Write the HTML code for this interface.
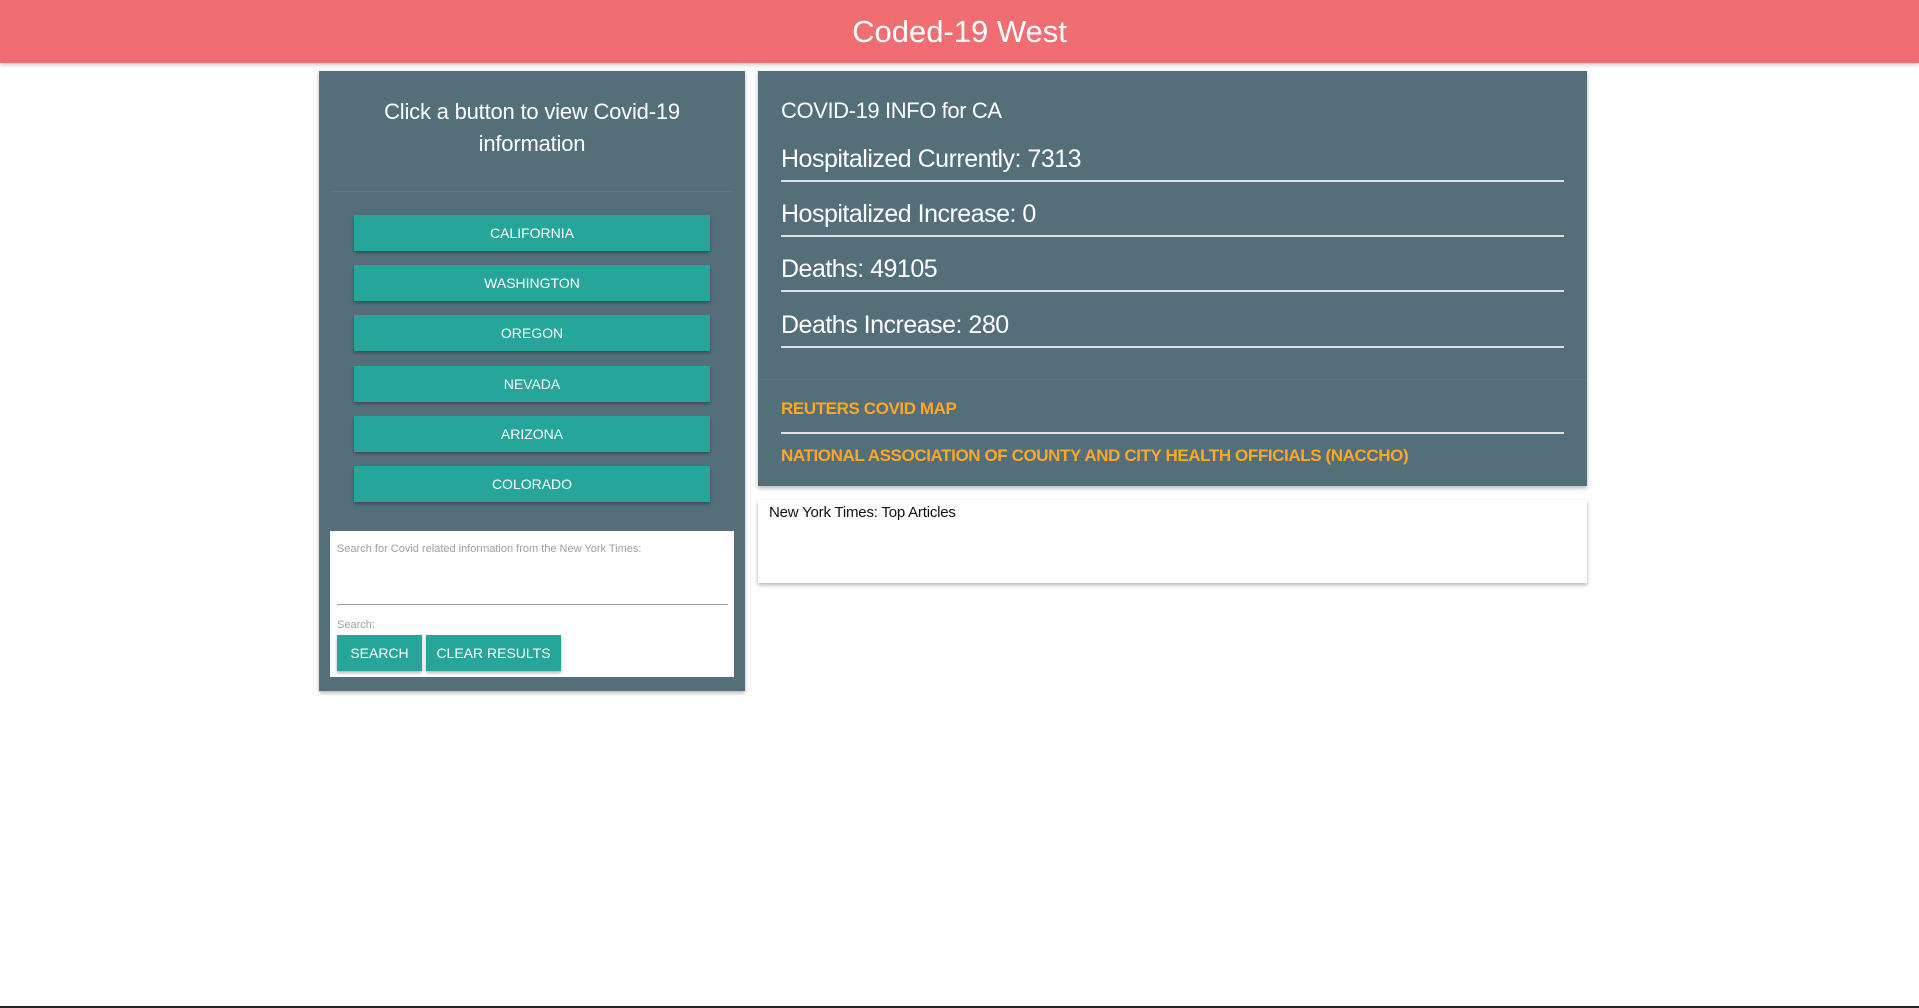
<!DOCTYPE html>
<html><head><meta charset="utf-8"><style>
*{margin:0;padding:0;box-sizing:border-box}
body{width:1919px;height:1008px;background:#fff;font-family:"Liberation Sans",sans-serif;position:relative;overflow:hidden}
.a{position:absolute}
.hdr{left:0;top:0;width:1919px;height:63px;background:#f06e72;box-shadow:0 2px 4px rgba(0,0,0,.2);color:#fff;font-size:31px;text-align:center;line-height:64px}
.panel{background:#546e7a;box-shadow:0 2px 4px rgba(0,0,0,.3)}
.btn{left:354px;width:356px;height:36px;background:#26a69a;color:#fff;font-size:14px;text-align:center;line-height:36px;box-shadow:0 2px 3px rgba(0,0,0,.3)}
.item{left:781px;width:783px;color:#fff;font-size:25px;letter-spacing:-.5px;border-bottom:2px solid #e0e0e0;height:40px;line-height:34px}
.lnk{left:781px;color:#ffa726;font-weight:bold;font-size:17px;letter-spacing:-.4px}
.sb{height:36px;background:#26a69a;color:#fff;font-size:14px;line-height:36px;text-align:center;box-shadow:0 2px 3px rgba(0,0,0,.3)}
</style></head><body>
<div class="a hdr">Coded-19 West</div>
<div class="a panel" style="left:319px;top:71px;width:426px;height:620px"></div>
<div class="a" style="left:319px;top:96px;width:426px;text-align:center;color:#fff;font-size:22px;line-height:32px;letter-spacing:-.2px">Click a button to view Covid-19<br>information</div>
<div class="a" style="left:330px;top:191px;width:404px;height:1px;background:#62787f"></div>
<div class="a btn" style="top:215px">CALIFORNIA</div>
<div class="a btn" style="top:265px">WASHINGTON</div>
<div class="a btn" style="top:315px">OREGON</div>
<div class="a btn" style="top:366px">NEVADA</div>
<div class="a btn" style="top:416px">ARIZONA</div>
<div class="a btn" style="top:466px">COLORADO</div>
<div class="a" style="left:330px;top:531px;width:404px;height:146px;background:#fff"></div>
<div class="a" style="left:337px;top:543px;color:#9e9e9e;font-size:11px">Search for Covid related information from the New York Times:</div>
<div class="a" style="left:337px;top:604px;width:391px;height:1px;background:#9e9e9e"></div>
<div class="a" style="left:337px;top:619px;color:#9e9e9e;font-size:11px">Search:</div>
<div class="a sb" style="left:337px;top:635px;width:85px">SEARCH</div>
<div class="a sb" style="left:426px;top:635px;width:135px">CLEAR RESULTS</div>

<div class="a panel" style="left:758px;top:71px;width:829px;height:415px"></div>
<div class="a" style="left:781px;top:98px;color:#fff;font-size:22px;letter-spacing:-.4px">COVID-19 INFO for CA</div>
<div class="a item" style="top:142px">Hospitalized Currently: 7313</div>
<div class="a item" style="top:197px">Hospitalized Increase: 0</div>
<div class="a item" style="top:252px">Deaths: 49105</div>
<div class="a item" style="top:308px">Deaths Increase: 280</div>
<div class="a" style="left:758px;top:379px;width:829px;height:1px;background:#5f7984"></div>
<div class="a lnk" style="top:399px">REUTERS COVID MAP</div>
<div class="a" style="left:781px;top:432px;width:783px;height:2px;background:#e0e0e0"></div>
<div class="a lnk" style="top:446px">NATIONAL ASSOCIATION OF COUNTY AND CITY HEALTH OFFICIALS (NACCHO)</div>
<div class="a" style="left:758px;top:500px;width:829px;height:83px;background:#fff;box-shadow:0 2px 4px rgba(0,0,0,.3)"></div>
<div class="a" style="left:769px;top:504px;color:#111;font-size:15px;letter-spacing:-.2px">New York Times: Top Articles</div>
<div class="a" style="left:0;top:1006px;width:1919px;height:2px;background:#222"></div>
</body></html>
